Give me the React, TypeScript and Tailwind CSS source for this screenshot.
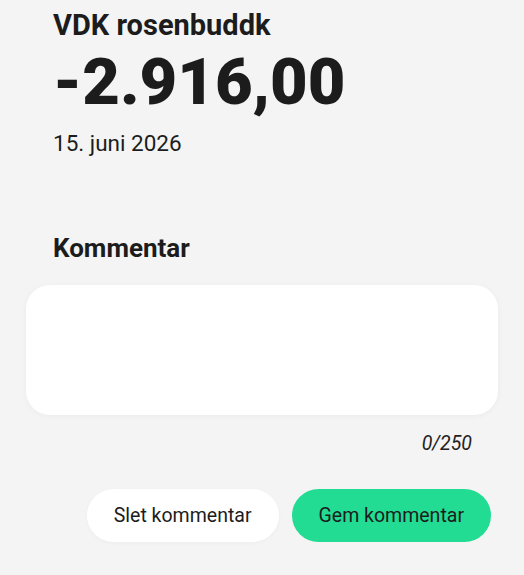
const App = () => {
  return (
    <div
      className="min-h-[575px] w-full bg-[#f4f4f4] text-[#1c1c1c]"
      style={{ fontFamily: "Roboto, 'Liberation Sans', sans-serif" }}
    >
      <div className="px-[53px] pt-[8px]">
        <h1 className="text-[29px] font-bold leading-[34px]">VDK rosenbuddk</h1>
        <p className="mt-[8px] text-[65px] font-black leading-[65px]">-2.916,00</p>
        <p className="mt-[14px] text-[22.5px] leading-[28px]">15. juni 2026</p>
        <h2 className="mt-[75px] text-[26px] font-bold leading-[32px]">Kommentar</h2>
      </div>

      <div className="mx-[26px] mt-[21px] h-[130px] rounded-[24px] bg-white shadow-[0_1px_6px_rgba(0,0,0,0.04)]" />

      <div className="flex justify-end pr-[52px] pt-[17px]">
        <span className="text-[19.5px] italic leading-[24px] text-[#222]">0/250</span>
      </div>

      <div className="mt-[33px] flex justify-end gap-[13px] pr-[33px]">
        <button className="h-[53px] rounded-full bg-white px-[27px] text-[19.5px] text-[#1c1c1c] shadow-[0_1px_4px_rgba(0,0,0,0.03)]">
          Slet kommentar
        </button>
        <button className="h-[53px] rounded-full bg-[#22dc93] px-[27px] text-[19.5px] text-[#1c1c1c]">
          Gem kommentar
        </button>
      </div>
    </div>
  );
};

export default App;
